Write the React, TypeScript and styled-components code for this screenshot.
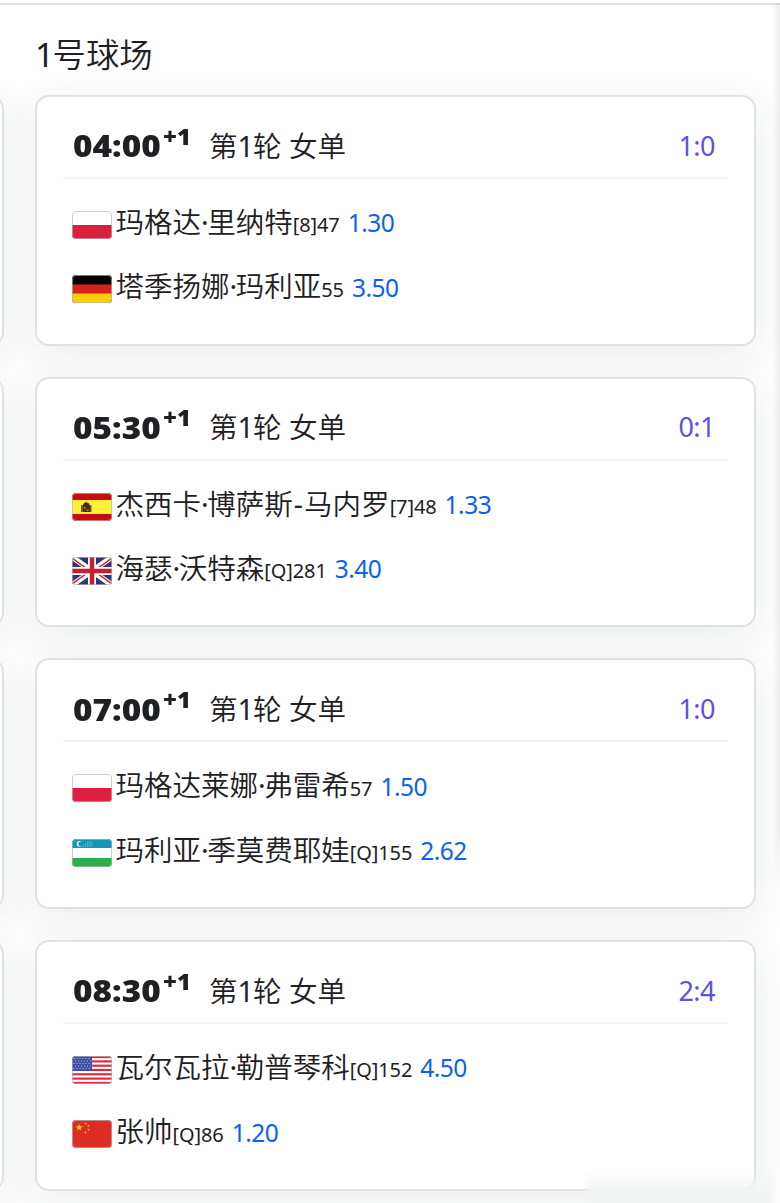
import React from "react";
import styled, { createGlobalStyle } from "styled-components";

const Global = createGlobalStyle`
  * { box-sizing: border-box; }
  body { margin: 0; background: #fff; overflow: hidden; }
`;

const Page = styled.main`
  position: relative;
  width: 780px;
  height: 1203px;
  overflow: hidden;
  background: #fff;
  color: #1f2023;
  font-family: "Noto Sans", "Noto Sans CJK SC", sans-serif;
  font-weight: 350;
  border-top: 3px solid #fff;
`;

const Board = styled.div`
  border-top: 2px solid #dfe1e8;
  height: 1200px;
  display: grid;
  grid-template-columns: 721px 721px;
  column-gap: 31px;
  margin-left: -717px;
`;

const Column = styled.section`
  display: flex;
  flex-direction: column;
`;

const Title = styled.h2`
  margin: 0;
  height: 90px;
  padding: 25px 0 0 0;
  font-size: 33.4px;
  line-height: 48px;
  font-weight: 350;
  white-space: nowrap;
`;

const Cards = styled.div`
  display: flex;
  flex-direction: column;
  gap: 31px;
`;

const Card = styled.article`
  height: 250.7px;
  flex: none;
  border: 2px solid #dee2e8;
  border-radius: 14px;
  background: #fff;
  padding: 16px 26px 0 26px;
  box-shadow: 0 10px 40px rgba(35, 50, 50, 0.095);
`;

const Head = styled.header`
  height: 66px;
  border-bottom: 2px solid #f3f4f5;
  padding: 1.6px 13px 0 10px;
  display: flex;
  align-items: center;
  white-space: nowrap;
`;

const Time = styled.span`
  width: 90px;
  font-family: "Noto Sans", sans-serif;
  font-size: 30px;
  font-weight: 900;
  line-height: 40px;
  padding-top: 1px;
  transform: scaleX(1.11);
  transform-origin: left;
`;

const Day = styled.span`
  width: 46px;
  font-family: "Noto Sans", sans-serif;
  font-size: 22.5px;
  font-weight: 900;
  line-height: 30px;
  padding-bottom: 18px;
  transform: scaleX(1.06);
  transform-origin: left;
`;

const Round = styled.span`
  font-size: 28.6px;
  line-height: 40px;
  flex: 1;
`;

const Score = styled.span`
  font-size: 27px;
  font-weight: 400;
  letter-spacing: -0.5px;
  line-height: 40px;
  color: #5a50ea;
`;

const Digit = styled.span<{ $w: number }>`
  display: inline-block;
  width: ${(p) => p.$w}px;
  text-align: center;
  font-weight: 400;
`;

const Players = styled.div`
  padding: 11.7px 0 0 9px;
`;

const Player = styled.div`
  height: 64.3px;
  display: flex;
  align-items: center;
  white-space: nowrap;
`;

const FlagBox = styled.svg`
  width: 40px;
  height: 28px;
  margin: 4px 3.5px 0 0;
  flex: none;
`;

const Name = styled.span`
  font-size: 28.5px;
  line-height: 44px;
  padding-bottom: 2px;
`;

const Rank = styled.span`
  font-size: 20px;
  font-weight: 400;
  letter-spacing: -0.1px;
  line-height: 30px;
  padding-top: 5px;
`;

const Odds = styled.span`
  margin-left: 8px;
  font-size: 24.5px;
  font-weight: 400;
  letter-spacing: -0.5px;
  line-height: 34px;
  padding-top: 1px;
  color: #0a62f0;
`;

const EdgeShade = styled.div`
  position: absolute;
  top: 0;
  right: 0;
  width: 8px;
  height: 880px;
  background: linear-gradient(to right, rgba(90, 90, 100, 0), rgba(90, 90, 100, 0.1));
  mask-image: linear-gradient(to bottom, #000 94%, transparent);
`;

const Haze = styled.div`
  position: absolute;
  left: 586px;
  top: 1168px;
  width: 188px;
  height: 40px;
  background: linear-gradient(to bottom, rgba(243, 244, 244, 0), #f2f3f3 55%);
  filter: blur(2px);
`;

type Country = "pl" | "de" | "es" | "gb" | "uz" | "us" | "cn";

const star = (cx: number, cy: number, r: number) =>
  Array.from({ length: 10 }, (_, i) => {
    const a = (Math.PI / 5) * i - Math.PI / 2;
    const q = i % 2 ? r * 0.4 : r;
    return `${cx + q * Math.cos(a)},${cy + q * Math.sin(a)}`;
  }).join(" ");

const art: Record<Country, React.ReactNode> = {
  pl: (<><rect width="40" height="28" fill="#fff" /><rect y="14" width="40" height="14" fill="#dc1f3e" /></>),
  de: (<><rect width="40" height="28" fill="#000" /><rect y="9.5" width="40" height="9.5" fill="#d8201f" /><rect y="18.5" width="40" height="9.5" fill="#ffcd05" /></>),
  es: (
    <>
      <rect width="40" height="28" fill="#c90a10" />
      <rect y="7" width="40" height="14" fill="#fcf236" />
      <path d="M9 12h1.5v7H9zM18 12h1.5v7H18z" fill="#6b5c3a" />
      <path d="M10.5 13l1-2.5 2.7-1.5 2.8 1.5 1 2.5v6h-7.5z" fill="#4a2c1b" />
      <path d="M12 14h1.5v2H12zM14.5 16.5h2v1.5h-2z" fill="#b98a2e" />
    </>
  ),
  gb: (
    <>
      <rect width="40" height="28" fill="#293a72" />
      <path d="M0 0L40 28M40 0L0 28" stroke="#fff" strokeWidth="5.5" />
      <path d="M0 1L18 14M22 14L40 27M40 1L22 14M18 14L0 27" stroke="#c8202c" strokeWidth="1.5" />
      <path d="M20 0V28M0 14H40" stroke="#fff" strokeWidth="8" />
      <path d="M20 0V28M0 14H40" stroke="#c8202c" strokeWidth="4.5" />
    </>
  ),
  uz: (
    <>
      <rect width="40" height="28" fill="#fff" />
      <rect width="40" height="9" fill="#1099b5" />
      <rect y="19" width="40" height="9" fill="#2ab04a" />
      <circle cx="7.5" cy="4.8" r="2.8" fill="#fff" />
      <circle cx="8.6" cy="4.8" r="2.4" fill="#1099b5" />
      {[3, 5, 7].map((y, r) => Array.from({ length: 3 + r }, (_, i) => (
        <circle key={`${y}-${i}`} cx={20 - i * 2.1} cy={y} r="0.5" fill="#bfe5ec" />
      )))}
    </>
  ),
  us: (
    <>
      <rect width="40" height="28" fill="#fff" />
      {Array.from({ length: 7 }, (_, i) => (
        <rect key={i} y={(i * 56) / 13} width="40" height={28 / 13} fill="#d92b3d" />
      ))}
      <rect width="20" height="15" fill="#3b50a0" />
      {[2, 4.5, 7, 9.5, 12].map((y, r) => Array.from({ length: 6 }, (_, i) => (
        <circle key={`${y}-${i}`} cx={2 + i * 3 + (r % 2) * 1.5} cy={y + 0.5} r="0.6" fill="#d5dcf2" />
      )))}
    </>
  ),
  cn: (
    <>
      <rect width="40" height="28" fill="#dd2c23" />
      <polygon points={star(7.2, 7.5, 3.8)} fill="#fdd22c" />
      {[[13.5, 3.5], [16.5, 6], [16.5, 9.8], [13.5, 12.5]].map(([x, y]) => (
        <polygon key={`${x}-${y}`} points={star(x, y, 1.4)} fill="#fbc02d" />
      ))}
    </>
  ),
};

function Flag({ code }: { code: Country }) {
  const id = `clip-${code}`;
  return (
    <FlagBox viewBox="0 0 40 28">
      <clipPath id={id}><rect width="40" height="28" rx="4" /></clipPath>
      <g clipPath={`url(#${id})`}>{art[code]}</g>
      <rect x="0.5" y="0.5" width="39" height="27" rx="3.5" fill="none" stroke="#b4b8bc" strokeOpacity="0.65" />
    </FlagBox>
  );
}

function NameText({ text }: { text: string }) {
  return (
    <Name>
      {text.split(/([·-])/).map((part, i) =>
        part === "·" ? <Digit key={i} $w={6.2}>·</Digit> : part === "-" ? <Digit key={i} $w={11.4}>-</Digit> : part
      )}
    </Name>
  );
}

interface Entry { flag: Country; name: string; rank: string; odds: string }
interface Match { time: string; score: string; players: Entry[] }

const matches: Match[] = [
  { time: "04:00", score: "1:0", players: [
    { flag: "pl", name: "玛格达·里纳特", rank: "[8]47", odds: "1.30" },
    { flag: "de", name: "塔季扬娜·玛利亚", rank: "55", odds: "3.50" } ] },
  { time: "05:30", score: "0:1", players: [
    { flag: "es", name: "杰西卡·博萨斯-马内罗", rank: "[7]48", odds: "1.33" },
    { flag: "gb", name: "海瑟·沃特森", rank: "[Q]281", odds: "3.40" } ] },
  { time: "07:00", score: "1:0", players: [
    { flag: "pl", name: "玛格达莱娜·弗雷希", rank: "57", odds: "1.50" },
    { flag: "uz", name: "玛利亚·季莫费耶娃", rank: "[Q]155", odds: "2.62" } ] },
  { time: "08:30", score: "2:4", players: [
    { flag: "us", name: "瓦尔瓦拉·勒普琴科", rank: "[Q]152", odds: "4.50" },
    { flag: "cn", name: "张帅", rank: "[Q]86", odds: "1.20" } ] },
];

export default function App() {
  return (
    <Page>
      <Global />
      <Board>
        <Column>
          <Title />
          <Cards>{matches.map((m) => <Card key={m.time} />)}</Cards>
        </Column>
        <Column>
          <Title><Digit $w={17.5}>1</Digit>号球场</Title>
          <Cards>
            {matches.map((m) => (
              <Card key={m.time}>
                <Head>
                  <Time>{m.time}</Time>
                  <Day>+1</Day>
                  <Round>第<Digit $w={15.4}>1</Digit>轮 女单</Round>
                  <Score>{m.score}</Score>
                </Head>
                <Players>
                  {m.players.map((p) => (
                    <Player key={p.name}>
                      <Flag code={p.flag} />
                      <NameText text={p.name} />
                      <Rank>{p.rank}</Rank>
                      <Odds>{p.odds}</Odds>
                    </Player>
                  ))}
                </Players>
              </Card>
            ))}
          </Cards>
        </Column>
      </Board>
      <EdgeShade />
      <Haze />
    </Page>
  );
}
